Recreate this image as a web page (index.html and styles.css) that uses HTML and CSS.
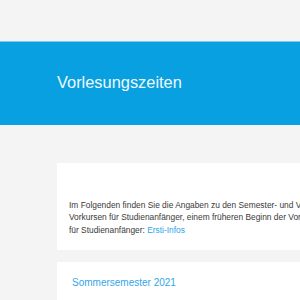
FILE: index.html
```html
<!DOCTYPE html>
<html lang="de">
<head>
<meta charset="utf-8">
<title>Vorlesungszeiten</title>
<link rel="stylesheet" href="styles.css">
</head>
<body>
<div class="topbar"></div>
<header class="hero">
  <h1 class="hero-title">Vorlesungszeiten</h1>
</header>
<main class="content">
  <section class="card intro">
    <p class="intro-text">Im Folgenden finden Sie die Angaben zu den Semester- und Vorlesungszeiten. Informationen zu den<br>Vorkursen für Studienanfänger, einem früheren Beginn der Vorlesungen sowie weitere Informationen<br>für Studienanfänger: <a class="link" href="#">Ersti-Infos</a></p>
  </section>
  <section class="card semester">
    <h2 class="semester-title">Sommersemester 2021</h2>
  </section>
</main>
</body>
</html>
```
FILE: styles.css
```css
html, body {
  margin: 0;
  padding: 0;
}
body {
  background: #f4f4f4;
  font-family: "Liberation Sans", Arial, sans-serif;
  overflow: hidden;
  width: 300px;
  height: 300px;
}
.topbar {
  height: 41px;
}
.hero {
  background: #08a0e0;
  border-top: 1px solid #7fcaea;
  height: 84px;
  box-sizing: border-box;
  padding: 30px 0 0 57px;
}
.hero-title {
  margin: 0;
  font-size: 16.4px;
  line-height: 20px;
  font-weight: normal;
  color: #eef8fd;
  white-space: nowrap;
}
.content {
  padding: 38px 0 0 57px;
  display: flex;
  flex-direction: column;
  gap: 12px;
}
.card {
  background: #ffffff;
  width: 520px;
}
.intro {
  padding: 35.5px 12px 13px;
}
.intro-text {
  margin: 0;
  font-size: 8.4px;
  line-height: 12.9px;
  color: #3a3a3a;
  white-space: nowrap;
}
.link {
  color: #2da5e8;
  text-decoration: none;
}
.semester {
  padding: 14px 15px;
}
.semester-title {
  margin: 0;
  font-size: 10px;
  line-height: 13px;
  font-weight: normal;
  color: #33a6e8;
}
```
